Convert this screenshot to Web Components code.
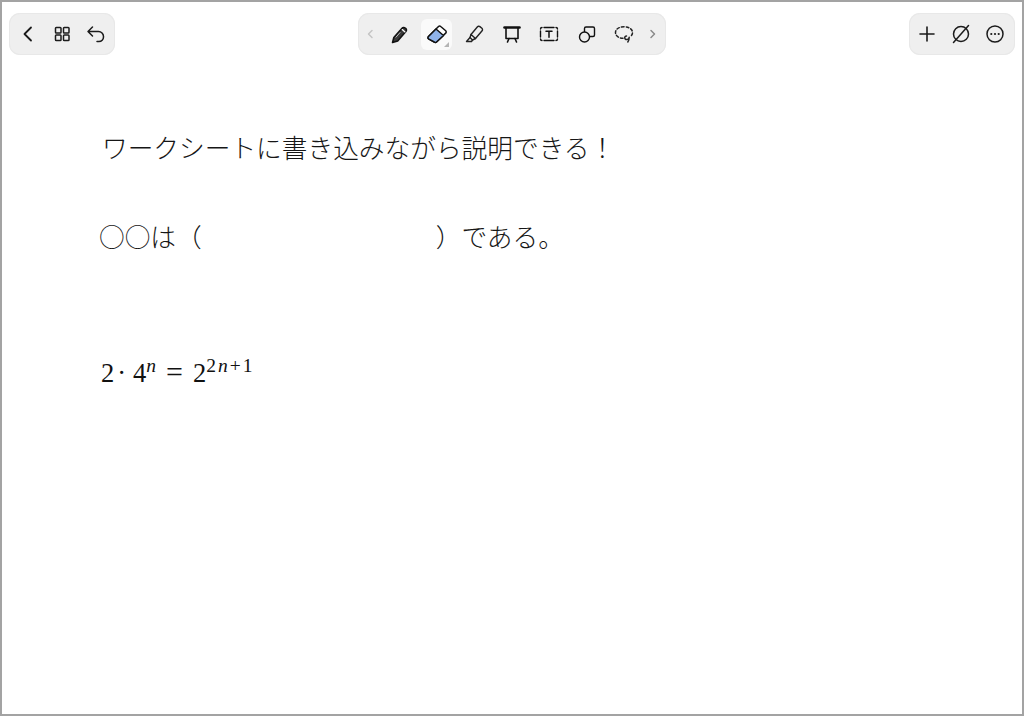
<!DOCTYPE html>
<html lang="ja">
<head>
<meta charset="utf-8">
<title>Worksheet</title>
<style>
  html, body { margin: 0; height: 100%; background: #fff; }
  body { font-family: "Noto Sans CJK JP", "Liberation Serif", serif; color: #111; }
</style>
</head>
<body>
<note-page>
  <note-toolbar slot="toolbar">
    <tool-group slot="left" style="--pad:0 2px" >
      <tool-button size="34"><svg viewBox="0 0 24 24" width="24" height="24" fill="none" stroke="#1b1b1b" stroke-width="1.800" stroke-linecap="round" stroke-linejoin="round"><path d="M15 5.500 8.500 12l6.500 6.500"/></svg></tool-button>
      <tool-button size="34"><svg viewBox="0 0 24 24" width="24" height="24" fill="none" stroke="#1b1b1b" stroke-width="1.500" stroke-linejoin="round"><rect x="5.500" y="5.500" width="5.500" height="5.500" rx=".8"/><rect x="13.500" y="5.500" width="5.500" height="5.500" rx=".8"/><rect x="5.500" y="13" width="5.500" height="5.500" rx=".8"/><rect x="13.500" y="13" width="5.500" height="5.500" rx=".8"/></svg></tool-button>
      <tool-button size="34"><svg viewBox="0 0 24 24" width="24" height="24" fill="none" stroke="#1b1b1b" stroke-width="1.500" stroke-linecap="round" stroke-linejoin="round"><path d="M8.500 5 4 9.500 8.500 14M4.500 9.500h10a5 5 0 0 1 5 5v.5a4.500 4.500 0 0 1-4.500 4.500h-2"/></svg></tool-button>
    </tool-group>

    <tool-group slot="center" style="--pad:0 6px 0 5px;--gap:6.5px">
      <tool-button size="14"><svg viewBox="0 0 14 24" width="14" height="24" fill="none" stroke="#c4c4c4" stroke-width="1.500" stroke-linecap="round" stroke-linejoin="round"><path d="M9 8.500 5.500 12 9 15.500"/></svg></tool-button>
      <tool-button size="31"><svg viewBox="0 0 24 24" width="24" height="24" fill="none" stroke="#111" stroke-width="1.500" stroke-linejoin="round" stroke-linecap="round"><path d="M5.500 20.500 6.800 15.500 15 6.200a2.300 2.300 0 0 1 3.300-.2l.4.3a2.300 2.300 0 0 1 .2 3.300L10.700 19l-5.200 1.500Z" fill="#3a3a3a"/><path d="m15.300 7.600 2.700 2.300" stroke="#fff" stroke-width="1.300"/><path d="m9 15.200 4-4.600" stroke="#bbb" stroke-width="1"/></svg></tool-button>
      <tool-button size="31" active><svg viewBox="0 0 24 24" width="24" height="24" fill="none" stroke="#111" stroke-width="1.500" stroke-linejoin="round"><path d="M3.500 14.500 13.500 4.500a1.600 1.600 0 0 1 2.200 0l5 4.300a1.600 1.600 0 0 1 0 2.300L11.500 20a1.600 1.600 0 0 1-2.200 0L3.500 16.800a1.600 1.600 0 0 1 0-2.300Z" fill="#fff"/><path d="M3.500 14.500 11 7l7.500 6.500-7 6.500a1.600 1.600 0 0 1-2.200 0L3.500 16.800a1.600 1.600 0 0 1 0-2.300Z" fill="#8fb3ea"/></svg></tool-button>
      <tool-button size="31"><svg viewBox="0 0 24 24" width="24" height="24" fill="none" stroke="#222" stroke-width="1.400" stroke-linejoin="round" stroke-linecap="round"><path d="M9 12.500 15.500 4.800a1.700 1.700 0 0 1 2.400-.2l2 1.700a1.700 1.700 0 0 1 .2 2.400L13.500 16.500"/><path d="M9 12.500 8 15.500l2.500 2.500 3-1.500Z"/><path d="M8 15.500 4.500 19.500h5l1-1.500"/></svg></tool-button>
      <tool-button size="31"><svg viewBox="0 0 24 24" width="24" height="24" fill="none" stroke="#111" stroke-width="1.600" stroke-linecap="round" stroke-linejoin="round"><path d="M4.500 5.500h15" stroke-width="2.600"/><path d="M6 6v10.500h12V6"/><path d="M9 16.500l-1.500 3.500M15 16.500l1.500 3.500"/></svg></tool-button>
      <tool-button size="31"><svg viewBox="0 0 24 24" width="24" height="24" fill="none" stroke="#111" stroke-width="1.400" stroke-linecap="round" stroke-linejoin="round"><path d="M7 5.500h10M7 18.500h10M3.500 9v6M20.500 9v6"/><path d="M3.500 7a1.500 1.500 0 0 1 1.500-1.500M19 5.500A1.500 1.500 0 0 1 20.500 7M20.500 17a1.500 1.500 0 0 1-1.500 1.500M5 18.500A1.500 1.500 0 0 1 3.500 17"/><path d="M9 9.300h6M12 9.300v6" stroke-width="1.500"/></svg></tool-button>
      <tool-button size="31"><svg viewBox="0 0 24 24" width="24" height="24" fill="none" stroke="#111" stroke-width="1.400" stroke-linejoin="round"><path d="M9.500 10V6.500a1.500 1.500 0 0 1 1.500-1.500h7a1.500 1.500 0 0 1 1.500 1.500v6.500a1.500 1.500 0 0 1-1.500 1.500h-3.500"/><circle cx="9.500" cy="15" r="5"/></svg></tool-button>
      <tool-button size="31"><svg viewBox="0 0 24 24" width="24" height="24" fill="none" stroke="#222" stroke-width="1.500" stroke-linecap="round" stroke-linejoin="round"><path d="M11 16.300c-4.300 0-7.500-2.500-7.500-5.800S7 4.800 12 4.800s8.500 2.400 8.500 5.700c0 1.800-1 3.300-2.700 4.300" stroke-dasharray="2.600 2.200"/><path d="M14.500 14a1.800 1.800 0 1 0 .1 3.600c1.800 0 2.600-1 2.600-2.300 0 1.700-.3 3.200-1.400 4.700"/></svg></tool-button>
      <tool-button size="14"><svg viewBox="0 0 14 24" width="14" height="24" fill="none" stroke="#8a8a8a" stroke-width="1.500" stroke-linecap="round" stroke-linejoin="round"><path d="M5 8.500 8.500 12 5 15.500"/></svg></tool-button>
    </tool-group>

    <tool-group slot="right" style="--pad:0 3px 0 1px">
      <tool-button size="34"><svg viewBox="0 0 24 24" width="24" height="24" fill="none" stroke="#1b1b1b" stroke-width="1.600" stroke-linecap="round"><path d="M12 5v14M5 12h14"/></svg></tool-button>
      <tool-button size="34"><svg viewBox="0 0 24 24" width="24" height="24" fill="none" stroke="#1b1b1b" stroke-width="1.500" stroke-linecap="round"><circle cx="12" cy="12" r="7.500"/><path d="M19.500 3.500 4.500 20.500"/></svg></tool-button>
      <tool-button size="34"><svg viewBox="0 0 24 24" width="24" height="24" fill="none" stroke="#1b1b1b" stroke-width="1.500"><circle cx="12" cy="12" r="8"/><circle cx="8.300" cy="12" r="1.100" fill="#1b1b1b" stroke="none"/><circle cx="12" cy="12" r="1.100" fill="#1b1b1b" stroke="none"/><circle cx="15.700" cy="12" r="1.100" fill="#1b1b1b" stroke="none"/></svg></tool-button>
    </tool-group>
  </note-toolbar>

  <sheet-line style="--top:73px">ワークシートに書き込みながら説明できる！</sheet-line>
  <sheet-line style="--top:51px;--indent:-3px"><span>○○は（</span><blank-space></blank-space><span>）である。</span></sheet-line>
  <math-line style="--top:102px"></math-line>
</note-page>

<script>
class NotePage extends HTMLElement {
  constructor() {
    super();
    this.attachShadow({ mode: "open" });
    this.shadowRoot.innerHTML = `
      <style>
        :host {
          display: flex;
          flex-direction: column;
          box-sizing: border-box;
          width: 1024px;
          height: 716px;
          border: 2px solid #a3a3a3;
          background: #fff;
          overflow: hidden;
        }
        .sheet { padding-left: 100px; display: flex; flex-direction: column; }
      </style>
      <slot name="toolbar"></slot>
      <div class="sheet"><slot></slot></div>
    `;
  }
}

class NoteToolbar extends HTMLElement {
  constructor() {
    super();
    this.attachShadow({ mode: "open" });
    this.shadowRoot.innerHTML = `
      <style>
        :host {
          display: grid;
          grid-template-columns: 1fr auto 1fr;
          align-items: center;
          padding: 11px 7px 0;
        }
        .end { display: flex; justify-content: flex-end; }
        .start { display: flex; }
        .mid { display: flex; }
      </style>
      <div class="start"><slot name="left"></slot></div>
      <div class="mid"><slot name="center"></slot></div>
      <div class="end"><slot name="right"></slot></div>
    `;
  }
}

class ToolGroup extends HTMLElement {
  constructor() {
    super();
    this.attachShadow({ mode: "open" });
    this.shadowRoot.innerHTML = `
      <style>
        :host {
          display: flex;
          align-items: center;
          box-sizing: border-box;
          height: 42px;
          padding: var(--pad, 0);
          gap: var(--gap, 0);
          background: #efefef;
          box-shadow: inset 0 0 0 1px #e8e8e8;
          border-radius: 11px;
        }
      </style>
      <slot></slot>
    `;
  }
}

class ToolButton extends HTMLElement {
  constructor() {
    super();
    this.attachShadow({ mode: "open" });
    const size = this.getAttribute("size") || 34;
    const active = this.hasAttribute("active");
    this.shadowRoot.innerHTML = `
      <style>
        :host {
          display: flex;
          align-items: center;
          justify-content: center;
          position: relative;
          width: ${size}px;
          height: 31px;
          border-radius: 6px;
          ${active ? "background: #fafafa;" : ""}
        }
        .corner {
          position: absolute;
          right: 3px;
          bottom: 3px;
          width: 0;
          height: 0;
          border-left: 5px solid transparent;
          border-bottom: 5px solid #b5b5b5;
        }
        ::slotted(svg) { display: block; flex: none; }
      </style>
      <slot></slot>
      ${active ? '<span class="corner"></span>' : ""}
    `;
  }
}

class SheetLine extends HTMLElement {
  constructor() {
    super();
    this.attachShadow({ mode: "open" });
    this.shadowRoot.innerHTML = `
      <style>
        :host {
          display: flex;
          margin-top: var(--top, 0);
          margin-left: var(--indent, 0);
          font: 300 25.700px/38px "Noto Sans CJK JP", "Liberation Serif", serif;
          color: #161616;
          white-space: nowrap;
        }
      </style>
      <slot></slot>
    `;
  }
}

class BlankSpace extends HTMLElement {
  constructor() {
    super();
    this.attachShadow({ mode: "open" });
    this.shadowRoot.innerHTML = `
      <style>:host { display: block; width: 234px; }</style>
    `;
  }
}

class MathLine extends HTMLElement {
  constructor() {
    super();
    this.attachShadow({ mode: "open" });
    this.shadowRoot.innerHTML = `
      <style>
        :host {
          display: flex;
          align-items: baseline;
          margin-top: var(--top, 0);
          margin-left: -1px;
          font: 400 26.500px/32px "Liberation Serif", serif;
          color: #111;
          white-space: nowrap;
        }
        sup {
          font-size: 19.500px;
          line-height: 0;
          position: relative;
          top: -10px;
          letter-spacing: 2px;
        }
        i { font-style: italic; }
        .op { margin: 0 7px 0 3px; }
        .eq { margin: 0 10px 0 8px; font-size: 30px; line-height: 0; }
      </style>
      <span>2</span><span class="op">·</span><span>4</span><sup><i>n</i></sup><span class="eq">=</span><span>2</span><sup>2<i>n</i>+1</sup>
    `;
  }
}

customElements.define("note-page", NotePage);
customElements.define("note-toolbar", NoteToolbar);
customElements.define("tool-group", ToolGroup);
customElements.define("tool-button", ToolButton);
customElements.define("sheet-line", SheetLine);
customElements.define("blank-space", BlankSpace);
customElements.define("math-line", MathLine);
</script>
</body>
</html>
